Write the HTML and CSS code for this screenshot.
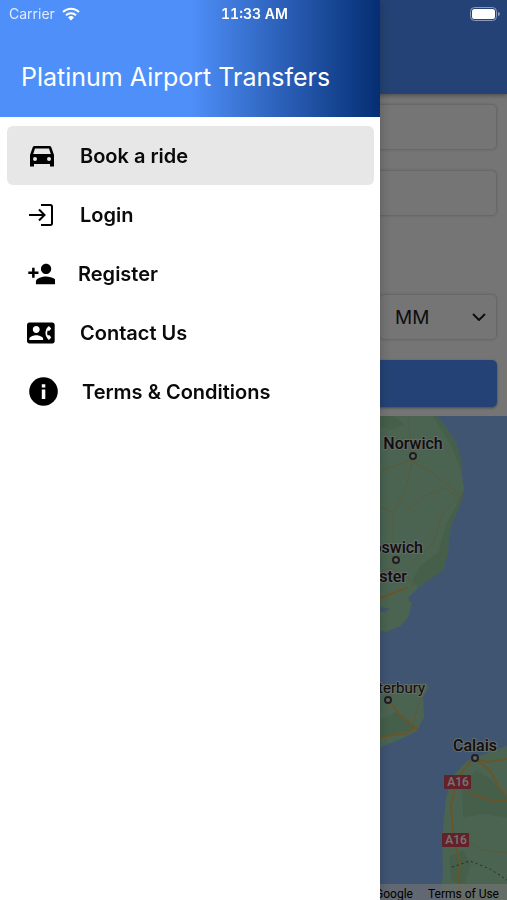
FILE: index.html
```html
<!DOCTYPE html>
<html lang="en">
<head>
    <meta charset="UTF-8">
    <meta name="viewport" content="width=device-width, initial-scale=1.0">
    <title>Platinum Airport Transfers</title>
    <link rel="stylesheet" href="styles.css">
</head>
<body>

<!-- booking page -->
<main class="page">
    <div class="toolbar"></div>

    <form class="booking">
        <input type="text" class="field" aria-label="Pick up">
        <input type="text" class="field" aria-label="Drop off">
        <div class="time-row">
            <input type="text" class="field date" aria-label="Date">
            <input type="text" class="field" aria-label="Hour">
            <div class="select-wrap">
                <select class="field" aria-label="Minutes">
                    <option>MM</option>
                </select>
                <svg class="chevron" viewBox="0 0 14 8"><path d="M1 1l6 6 6-6"/></svg>
            </div>
        </div>
        <button type="button" class="search" aria-label="Search"></button>
    </form>

    <div class="map">
        <svg class="map-art" viewBox="0 0 507 484" preserveAspectRatio="xMaxYMin slice">
            <!-- East Anglia -->
            <path class="land" d="M300 0H437L446 11 455 25 461 42 462 60 464 74 460 90 453 105 449 118 448 137 443 154 430 163 418 172 408 182 411 188 401 194 393 196 388 192 370 190H300z"/>
            <path class="forest" d="M433 0h4l9 11 9 14 6 17 1 18 2 14-4 16-7 15-4 13-1 19-5 17-13 9-12 9-6-8 8-14 18-14 8-28 10-18 8-18-4-20-8-20z"/>
            <path class="forest" d="M376 0h18l10 8-12 6-16-4z"/>
            <path class="road" d="M409 0l2 40M370 66l14-12 26-10 16 9 16 12 20 14M412 46l-8 32-11 18-13-5M404 96l20-16 20-8 14 8M393 96v55M461 80l-18 16-10 32-24 20M370 160l20-8 18 8 6 12"/>
            <path class="road strong" d="M370 186l18-7 20-8"/>
            <!-- Kent -->
            <path class="land" d="M300 196h84l22-10 6 0-4 16-8 8-14 6-14-4H300z"/>
            <path class="land" d="M300 270h105l20-3 4 4-6 10 1 20-7 14-14 7-22 9H300z"/>
            <path class="forest" d="M380 304l16-8 18 14 2 3-36 8z"/>
            <path class="road strong" d="M389 285l11 14 17 13-14 6-33 4"/>
            <path class="road" d="M419 286l-6 22"/>
            <!-- France -->
            <path class="land" d="M507 330l-20 7-20 8-14 15-7 22-4 40 1 34-2 22 10 10h56z"/>
            <path class="forest" d="M462 368l14-14 16 10 15 18v20l-24-4-20 4zM449 440l14-6 8 14-6 20-14-2z"/>
            <path class="road strong" d="M472 344l-10 12-7 16-4 18 3 34 6 22-2 20 6 18M475 343l12 3 20-3M478 345l12 10 10 18 7 8M470 377l22 8 15-1"/>
            <path class="road" d="M461 420l20 14 26 3"/>
            <path class="border-line" d="M452 451l18-6 20 8 17 11"/>
            <g class="places">
                <circle cx="413" cy="40" r="3"/>
                <circle cx="396" cy="144" r="3"/>
                <circle cx="388" cy="284" r="3"/>
                <circle cx="475" cy="342" r="3"/>
            </g>
            <g class="labels">
                <text x="413" y="33" text-anchor="middle">Norwich</text>
                <text x="423" y="137" text-anchor="end">Ipswich</text>
                <text x="407" y="166" text-anchor="end">Colchester</text>
                <text class="light" x="425" y="277" text-anchor="end">Canterbury</text>
                <text x="475" y="335" text-anchor="middle">Calais</text>
            </g>
            <g class="shields">
                <rect x="444" y="359" width="27" height="14" rx="1"/>
                <rect x="442" y="417" width="27" height="14" rx="1"/>
                <text x="458" y="370" text-anchor="middle">A16</text>
                <text x="456" y="428" text-anchor="middle">A16</text>
            </g>
        </svg>
        <div class="map-credit">
            <span>Google</span>
            <a href="#">Terms of Use</a>
        </div>
    </div>
</main>

<div class="backdrop"></div>

<!-- side menu -->
<aside class="drawer">
    <header class="drawer-header">
        <h1>Platinum Airport Transfers</h1>
    </header>
    <nav class="menu">
        <a href="#" class="menu-item active">
            <svg class="icon" viewBox="0 0 30 30"><path fill-rule="evenodd" d="M7.500 5h15a2 2 0 0 1 1.800 1.300L27 14v11.500h-4V23H7v2.500H3V14L5.700 6.300A2 2 0 0 1 7.500 5zM8 7.500L6.200 13h17.600L22 7.500zM8 16a2 2 0 1 0 0 4 2 2 0 0 0 0-4zM22 16a2 2 0 1 0 0 4 2 2 0 0 0 0-4z"/></svg>
            Book a ride
        </a>
        <a href="#" class="menu-item">
            <svg class="icon line" viewBox="0 0 30 30"><path d="M14 5h9.500a1.500 1.500 0 0 1 1.500 1.500v17a1.500 1.500 0 0 1-1.500 1.500H14M2 15h15M12 9.500l5.500 5.500-5.500 5.500"/></svg>
            Login
        </a>
        <a href="#" class="menu-item">
            <svg class="icon small" viewBox="0 1 22 22"><path d="M15 12c2.210 0 4-1.790 4-4s-1.790-4-4-4-4 1.790-4 4 1.790 4 4 4zm-9-2V7H4v3H1v2h3v3h2v-3h3v-2H6zm9 4c-2.670 0-8 1.340-8 4v2h16v-2c0-2.660-5.330-4-8-4z"/></svg>
            Register
        </a>
        <a href="#" class="menu-item">
            <svg class="icon" viewBox="0 -1 26 26"><path d="M22 3H2C.9 3 0 3.900 0 5v14c0 1.100.9 2 2 2h20c1.100 0 1.990-.9 1.990-2L24 5c0-1.100-.9-2-2-2zM8 6c1.660 0 3 1.340 3 3s-1.340 3-3 3-3-1.340-3-3 1.340-3 3-3zm6 12H2v-1c0-2 4-3.100 6-3.100s6 1.100 6 3.100v1zm3.850-4h1.640L21 16l-1.990 1.990c-1.310-.98-2.280-2.380-2.730-3.990-.18-.64-.28-1.310-.28-2s.1-1.360.28-2c.45-1.620 1.420-3.010 2.730-3.990L21 8l-1.510 2h-1.640c-.22.630-.35 1.300-.35 2s.13 1.370.35 2z"/></svg>
            Contact Us
        </a>
        <a href="#" class="menu-item">
            <svg class="icon large" viewBox="0 0 32 32"><circle cx="16.500" cy="15.500" r="14.300"/><path fill="#fff" d="M14.800 8.300h3.500v3.200h-3.500zM14.800 13.500h3.500v9.500h-3.500z"/></svg>
            Terms &amp; Conditions
        </a>
    </nav>
</aside>

<div class="status-bar">
    <div class="carrier">
        Carrier
        <svg class="wifi" viewBox="0 0 18 14"><path d="M1 5a11.500 11.500 0 0 1 16 0M4 8.200a7.200 7.200 0 0 1 10 0"/><path class="dot" d="M9 13.500l-3-3a4.300 4.300 0 0 1 6 0z"/></svg>
    </div>
    <div class="clock">11:33 AM</div>
    <svg class="battery" viewBox="0 0 30 14">
        <rect class="case" x="0.500" y="0.500" width="26" height="13" rx="4"/>
        <rect class="charge" x="2" y="2" width="23" height="10" rx="2.500"/>
        <path class="tip" d="M28 5c2.500.5 2.500 3.500 0 4z"/>
    </svg>
</div>

</body>
</html>
```

FILE: styles.css
```css
* {
    box-sizing: border-box;
}
body {
    margin: 0;
    font-family: Inter, 'Liberation Sans', sans-serif;
    background-color: #fff;
    color: #000;
}

/* booking page */
.page {
    display: flex;
    flex-direction: column;
    min-height: 100vh;
}
.toolbar {
    height: 94px;
    background-color: #5091ff;
    box-shadow: 0 2px 4px rgba(0,0,0,0.3);
}
.booking {
    display: flex;
    flex-direction: column;
    gap: 20px;
    padding: 10px 10px 9px;
}
.field {
    width: 100%;
    height: 46px;
    padding: 0 15px;
    border: 1px solid #e2e2e2;
    border-radius: 5px;
    background-color: #fff;
    box-shadow: 0 0 3px rgba(0,0,0,0.15);
    font-family: inherit;
    font-size: 19px;
    color: #222;
}
.time-row {
    display: grid;
    grid-template-columns: repeat(4, 1fr);
    gap: 5px;
    margin-top: 58px;
}
.date {
    grid-column: span 2;
}
.select-wrap {
    position: relative;
}
.select-wrap select {
    appearance: none;
}
.chevron {
    position: absolute;
    right: 11px;
    top: 19px;
    width: 14px;
    height: 8px;
    fill: none;
    stroke: #222;
    stroke-width: 2;
    pointer-events: none;
}
.search {
    height: 47px;
    border: none;
    border-radius: 5px;
    background-color: #5091ff;
    box-shadow: 0 1px 3px rgba(0,0,0,0.4);
}

/* map */
.map {
    position: relative;
    flex: 1;
    min-height: 300px;
    overflow: hidden;
    background-color: #8ab9f9;
}
.map-art {
    position: absolute;
    width: 100%;
    height: 100%;
}
.land {
    fill: #a3dbb2;
}
.forest {
    fill: #96d0a2;
}
.road {
    fill: none;
    stroke: #c5c27a;
    stroke-width: 1;
}
.strong {
    stroke: #e5b95c;
    stroke-width: 2;
}
.border-line {
    fill: none;
    stroke: #555;
    stroke-dasharray: 2 3;
}
.places circle {
    fill: #ddd;
    stroke: #444;
    stroke-width: 2;
}
.labels text {
    font-family: Roboto, sans-serif;
    font-size: 16px;
    font-weight: 500;
    fill: #222;
    stroke: #dfeae2;
    stroke-width: 2;
    paint-order: stroke;
}
.labels .light {
    font-size: 15px;
    font-weight: 400;
}
.shields rect {
    fill: #d9485a;
}
.shields text {
    font-family: Roboto, sans-serif;
    font-size: 12px;
    font-weight: 500;
    fill: #fff;
}
.map-credit {
    position: absolute;
    right: 0;
    bottom: 0;
    left: 0;
    display: flex;
    justify-content: flex-end;
    gap: 15px;
    height: 16px;
    padding: 0 8px;
    background-color: rgba(245,245,245,0.7);
    font-family: Roboto, sans-serif;
    font-size: 12px;
    line-height: 20px;
    white-space: nowrap;
}
.map-credit a {
    color: #000;
    text-decoration: none;
}

.backdrop {
    position: fixed;
    inset: 0;
    background-color: rgba(0,0,0,0.54);
}

/* side menu */
.drawer {
    position: fixed;
    top: 0;
    bottom: 0;
    left: 0;
    width: 75%;
    background-color: #fff;
    box-shadow: 0 0 12px rgba(0,0,0,0.25);
}
.drawer-header {
    height: 117px;
    padding: 60px 21px 0;
    background: linear-gradient(to right, #4f8ff9 50%, #052e73);
}
.drawer-header h1 {
    margin: 0;
    font-size: 25px;
    font-weight: 400;
    line-height: 34px;
    color: #fff;
    white-space: nowrap;
}
.menu {
    display: flex;
    flex-direction: column;
    padding: 9px 6px 9px 7px;
}
.menu-item {
    display: flex;
    align-items: center;
    gap: 23px;
    height: 59px;
    padding: 0 20px;
    border-radius: 6px;
    font-size: 20px;
    font-weight: 600;
    color: #0a0a0a;
    text-decoration: none;
}
.active {
    background-color: #e7e7e7;
}
.icon {
    width: 30px;
    height: 30px;
    fill: #000;
}
.icon.small {
    width: 28px;
    height: 28px;
}
.icon.large {
    width: 32px;
    height: 32px;
}
.icon.line {
    fill: none;
    stroke: #000;
    stroke-width: 2;
}

/* phone status bar */
.status-bar {
    position: fixed;
    top: 0;
    left: 0;
    right: 0;
    display: grid;
    grid-template-columns: 1fr auto 1fr;
    align-items: center;
    height: 27px;
    padding: 0 7px 0 9px;
    font-size: 14px;
    color: #fff;
}
.carrier {
    display: flex;
    align-items: center;
    gap: 7px;
    color: #dfebff;
}
.clock {
    font-weight: 600;
    font-variant-numeric: tabular-nums;
}
.wifi {
    width: 18px;
    height: 14px;
    fill: none;
    stroke: #fff;
    stroke-width: 2;
}
.wifi .dot {
    fill: #fff;
    stroke: none;
}
.battery {
    justify-self: end;
    width: 30px;
    height: 14px;
}
.case {
    fill: none;
    stroke: #8b9bba;
}
.charge {
    fill: #fff;
}
.tip {
    fill: #8b9bba;
}
```
